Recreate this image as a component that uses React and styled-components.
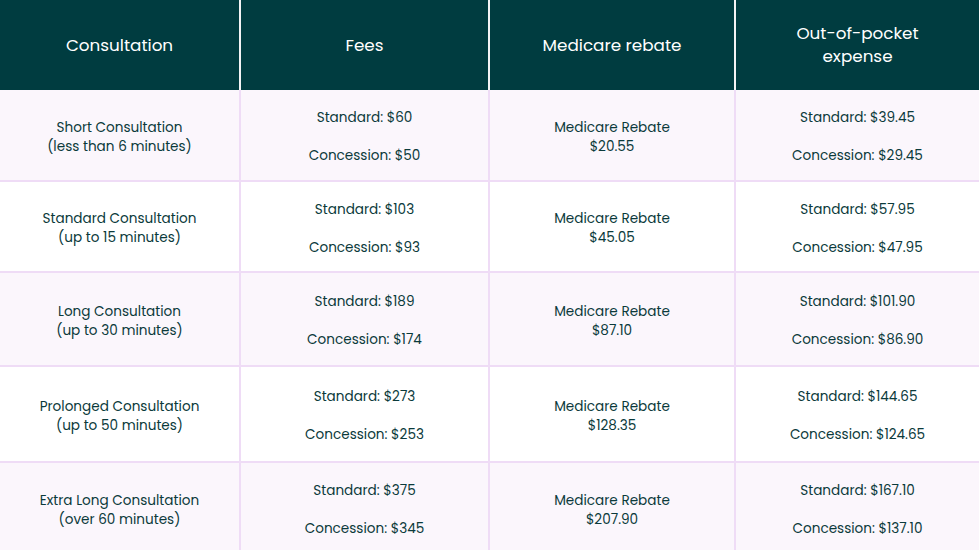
import React from "react";
import styled, { createGlobalStyle } from "styled-components";

const Global = createGlobalStyle`
  html, body { margin: 0; padding: 0; background: #ffffff; }
  body { font-family: "Poppins", "Open Sans", "Noto Sans", sans-serif; }
`;

const Table = styled.div`
  width: 979px;
  height: 550px;
  display: flex;
  flex-direction: column;
  overflow: hidden;
`;

const HeadRow = styled.div`
  display: grid;
  grid-template-columns: 239px 247px 244px 1fr;
  column-gap: 2px;
  background: #f3f3f5;
  height: 90px;
  flex-shrink: 0;
`;

const HeadCell = styled.div`
  background: #003c40;
  color: #ffffff;
  display: flex;
  align-items: center;
  justify-content: center;
  text-align: center;
  font-size: 16.8px;
  line-height: 23px;
  padding: 0 20px;
`;

const Body = styled.div`
  display: grid;
  grid-template-columns: 239px 247px 244px 1fr;
  gap: 2px;
  background: #efdcf6;
  flex-shrink: 0;
`;

const Cell = styled.div`
  box-sizing: border-box;
  background: ${(p) => (p.$shade ? "#fbf6fc" : "#ffffff")};
  height: ${(p) => p.$h}px;
  padding-top: 3px;
  color: #0b3a3b;
  display: flex;
  flex-direction: column;
  align-items: center;
  justify-content: center;
  text-align: center;
  font-size: 13.6px;
  line-height: 19px;
`;

const FeeLine = styled.div`
  & + & { margin-top: 19px; }
`;

const rows = [
  { name: "Short Consultation", dur: "(less than 6 minutes)", std: "$60", con: "$50", reb: "$20.55", oStd: "$39.45", oCon: "$29.45", h: 90 },
  { name: "Standard Consultation", dur: "(up to 15 minutes)", std: "$103", con: "$93", reb: "$45.05", oStd: "$57.95", oCon: "$47.95", h: 89 },
  { name: "Long Consultation", dur: "(up to 30 minutes)", std: "$189", con: "$174", reb: "$87.10", oStd: "$101.90", oCon: "$86.90", h: 92 },
  { name: "Prolonged Consultation", dur: "(up to 50 minutes)", std: "$273", con: "$253", reb: "$128.35", oStd: "$144.65", oCon: "$124.65", h: 94 },
  { name: "Extra Long Consultation", dur: "(over 60 minutes)", std: "$375", con: "$345", reb: "$207.90", oStd: "$167.10", oCon: "$137.10", h: 90 },
];

export default function App() {
  return (
    <>
      <Global />
      <Table>
        <HeadRow>
          <HeadCell>Consultation</HeadCell>
          <HeadCell>Fees</HeadCell>
          <HeadCell>Medicare rebate</HeadCell>
          <HeadCell>Out-of-pocket<br />expense</HeadCell>
        </HeadRow>
        <Body>
          {rows.map((r, i) => {
            const shade = i % 2 === 0;
            return (
              <React.Fragment key={r.name}>
                <Cell $shade={shade} $h={r.h}>
                  <div>{r.name}</div>
                  <div>{r.dur}</div>
                </Cell>
                <Cell $shade={shade} $h={r.h}>
                  <FeeLine>Standard: {r.std}</FeeLine>
                  <FeeLine>Concession: {r.con}</FeeLine>
                </Cell>
                <Cell $shade={shade} $h={r.h}>
                  <div>Medicare Rebate</div>
                  <div>{r.reb}</div>
                </Cell>
                <Cell $shade={shade} $h={r.h}>
                  <FeeLine>Standard: {r.oStd}</FeeLine>
                  <FeeLine>Concession: {r.oCon}</FeeLine>
                </Cell>
              </React.Fragment>
            );
          })}
        </Body>
      </Table>
    </>
  );
}
